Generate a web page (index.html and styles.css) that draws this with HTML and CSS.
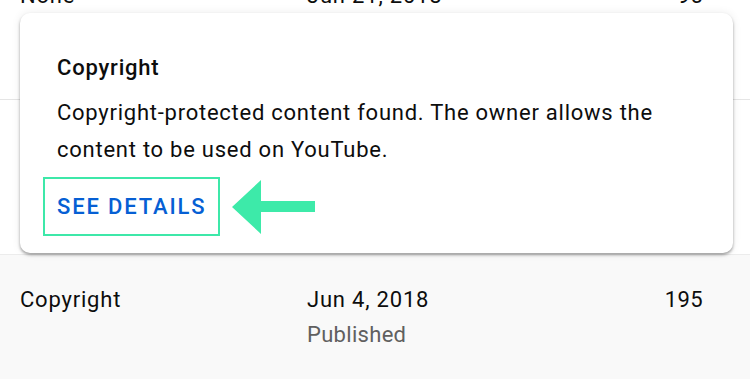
FILE: index.html
```html
<!DOCTYPE html>
<html>
<head>
<meta charset="utf-8">
<link rel="stylesheet" href="styles.css">
</head>
<body>
<div class="table">
  <div class="row row-top">
    <div class="cell c1">None</div>
    <div class="cell c2">Jun 21, 2018</div>
    <div class="cell c3">95</div>
  </div>
  <div class="row row-mid"></div>
  <div class="row row-hover">
    <div class="cell c1">Copyright</div>
    <div class="cell c2">
      <div>Jun 4, 2018</div>
      <div class="sub">Published</div>
    </div>
    <div class="cell c3">195</div>
  </div>
</div>
<div class="popover">
  <div class="title">Copyright</div>
  <div class="body">Copyright-protected content found. The owner allows the content to be used on YouTube.</div>
  <div class="actions">
    <a class="details">SEE DETAILS</a>
    <svg class="arrow" width="84" height="54" viewBox="0 0 84 54">
      <polygon points="0,27 29,0 29,21 83,21 83,32 29,32 29,54" fill="#3deaa9"/>
    </svg>
  </div>
</div>
</body>
</html>
```
FILE: styles.css
```css
html, body {
  margin: 0;
  padding: 0;
  background: #fff;
  font-family: Roboto, "Liberation Sans", sans-serif;
  color: #0d0d0d;
  overflow: hidden;
}
.table {
  width: 750px;
}
.row {
  display: flex;
  padding: 0 47px 0 20px;
  font-size: 22px;
  letter-spacing: 0.8px;
}
.row-top {
  margin-top: -18px;
  box-sizing: border-box;
  border-bottom: 1px solid #e5e5e5;
  height: 118px;
}
.row-mid {
  height: 154px;
}
.row-hover {
  background: #f9f9f9;
  height: 130px;
  padding-top: 31px;
  box-sizing: border-box;
  border-top: 1px solid #ececec;
}
.cell {
  line-height: 28px;
}
.c1 { width: 287px; }
.c2 { flex: 1; }
.c3 { text-align: right; letter-spacing: 0.4px; }
.sub {
  color: #606060;
  font-size: 22px;
  margin-top: 7px;
  letter-spacing: 0.3px;
}
.popover {
  position: absolute;
  left: 20px;
  top: 13px;
  width: 713px;
  height: 240px;
  box-sizing: border-box;
  background: #fff;
  border-radius: 10px;
  box-shadow: 0 2px 3px rgba(0,0,0,0.35), 0 0 10px rgba(0,0,0,0.08);
  padding: 41px 37px 0 37px;
}
.title {
  font-size: 22px;
  font-weight: 500;
  line-height: 28px;
  letter-spacing: 0.8px;
}
.body {
  font-size: 22px;
  line-height: 37px;
  margin-top: 12px;
  width: 620px;
  letter-spacing: 0.75px;
}
.actions {
  display: flex;
  align-items: center;
  margin-top: 9px;
  margin-left: -14px;
}
.details {
  display: block;
  border: 2px solid #3de8a9;
  color: #065fd4;
  font-size: 22px;
  font-weight: 500;
  line-height: 55px;
  padding: 0 12px;
  letter-spacing: 1.85px;
}
.arrow {
  margin-left: 12px;
  display: block;
}
```
